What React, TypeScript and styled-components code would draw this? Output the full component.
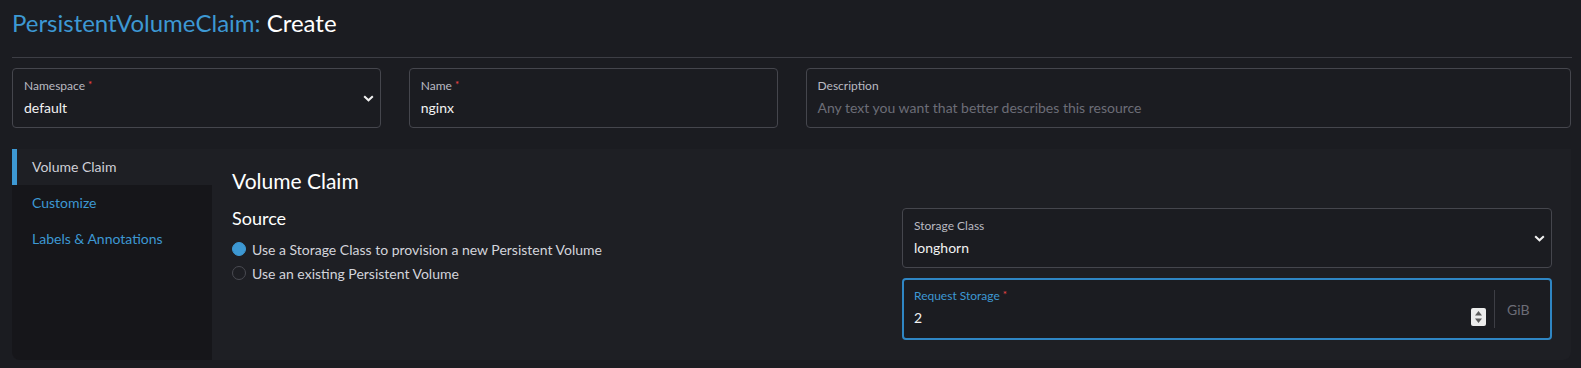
import React from "react";
import { styled, createGlobalStyle } from "styled-components";

const GlobalStyle = createGlobalStyle`
  html, body {
    margin: 0;
    padding: 0;
    background: #1b1c21;
  }
  body {
    font-family: "Lato", "Noto Sans", sans-serif;
    color: #e6e6e6;
  }
  * {
    box-sizing: border-box;
  }
`;

const Page = styled.div`
  width: 1581px;
  height: 368px;
  padding: 0 10px 0 12px;
  background: #1b1c21;
  overflow: hidden;
`;

const Header = styled.header`
  padding-top: 8px;
  border-bottom: 1px solid #3d3e45;
  padding-bottom: 19px;
  margin-right: -1px;
`;

const Title = styled.h1`
  margin: 0;
  font-size: 24px;
  line-height: 30px;
  font-weight: 400;
  color: #fff;
`;

const TitleType = styled.span`
  color: #3d98d3;
`;

const FieldGrid = styled.div`
  display: grid;
  grid-template-columns: repeat(4, 1fr);
  gap: 28px;
  margin-top: 10px;
`;

const Field = styled.div<{ $span?: number; $focused?: boolean }>`
  position: relative;
  grid-column: span ${(p) => p.$span ?? 1};
  display: flex;
  align-items: stretch;
  height: ${(p) => (p.$focused ? 62 : 60)}px;
  border: ${(p) => (p.$focused ? "2px solid #2f86c4" : "1px solid #45464d")};
  border-radius: 4px;
  background: #1b1c21;
`;

const FieldBody = styled.div<{ $focused?: boolean }>`
  flex: 1;
  display: flex;
  flex-direction: column;
  padding: ${(p) => (p.$focused ? "8px 10px 8px" : "9px 11px 8px")};
  min-width: 0;
`;

const Label = styled.div<{ $active?: boolean }>`
  font-size: 12px;
  line-height: 16px;
  color: ${(p) => (p.$active ? "#3d98d3" : "#b9bac2")};
`;

const Required = styled.span`
  color: #f64747;
  font-size: 10px;
  vertical-align: top;
  margin-left: 3px;
  line-height: 12px;
`;

const Value = styled.div<{ $placeholder?: boolean }>`
  margin-top: 4px;
  font-size: 14px;
  line-height: 20px;
  color: ${(p) => (p.$placeholder ? "#6c6d77" : "#f2f2f2")};
  white-space: nowrap;
`;

const Chevron = styled.div`
  display: flex;
  align-items: center;
  padding: 0 6px 0 0;
`;

const Suffix = styled.div`
  display: flex;
  align-items: center;
  width: 56px;
  margin: 10px 0 10px;
  padding-left: 12px;
  border-left: 1px solid #3d3e45;
  font-size: 14px;
  color: #6c6d77;
`;

const Spinner = styled.div`
  align-self: center;
  margin-top: 16px;
  margin-right: 8px;
  width: 15px;
  height: 18px;
  background: #ececec;
  border-radius: 2px;
  display: flex;
  align-items: center;
  justify-content: center;
`;

const Tabbed = styled.div`
  display: flex;
  margin-top: 21px;
  height: 211px;
  background: #1e1f24;
  border-radius: 0 0 8px 8px;
`;

const SideNav = styled.nav`
  width: 200px;
  flex: 0 0 200px;
  display: flex;
  flex-direction: column;
  background: #16161a;
  border-radius: 0 0 0 8px;
`;

const TabItem = styled.div<{ $active?: boolean }>`
  height: 36px;
  display: flex;
  align-items: center;
  padding-left: ${(p) => (p.$active ? 15 : 20)}px;
  padding-bottom: 1px;
  font-size: 14px;
  color: ${(p) => (p.$active ? "#cfd0d7" : "#3d98d3")};
  background: ${(p) => (p.$active ? "#1e1f24" : "transparent")};
  border-left: ${(p) => (p.$active ? "5px solid #3d98d3" : "none")};
`;

const Content = styled.section`
  flex: 1;
  padding: 19px 19px 20px 20px;
`;

const Heading = styled.h2`
  margin: 0 0 14px;
  font-size: 21px;
  line-height: 26px;
  font-weight: 400;
  color: #fff;
`;

const Columns = styled.div`
  display: grid;
  grid-template-columns: 1fr 1fr;
  gap: 20px;
`;

const Column = styled.div<{ $gap: number }>`
  display: flex;
  flex-direction: column;
  gap: ${(p) => p.$gap}px;
`;

const SubHeading = styled.h3`
  margin: 0;
  font-size: 18px;
  line-height: 20px;
  font-weight: 400;
  color: #fff;
`;

const RadioGroup = styled.div`
  display: flex;
  flex-direction: column;
`;

const RadioRow = styled.div`
  display: flex;
  align-items: center;
  height: 24px;
  font-size: 14px;
  color: #d3d4db;
`;

const RadioDot = styled.span<{ $checked?: boolean }>`
  width: 14px;
  height: 14px;
  border-radius: 50%;
  margin-right: 6px;
  background: ${(p) => (p.$checked ? "#3d98d3" : "transparent")};
  border: 1px solid ${(p) => (p.$checked ? "#3d98d3" : "#4a4b52")};
`;

const ChevronIcon = () => (
  <svg width="11" height="7" viewBox="0 0 11 7">
    <polyline
      points="1.2,1.2 5.5,5.3 9.8,1.2"
      fill="none"
      stroke="#f2f2f2"
      strokeWidth="2"
    />
  </svg>
);

const SpinIcon = () => (
  <svg width="9" height="14" viewBox="0 0 9 14">
    <polygon points="4.5,1 8,5.5 1,5.5" fill="#5b5b5b" />
    <polygon points="1,8.5 8,8.5 4.5,13" fill="#5b5b5b" />
  </svg>
);

const App = () => {
  return (
    <Page>
      <GlobalStyle />
      <Header>
        <Title>
          <TitleType>PersistentVolumeClaim:</TitleType> Create
        </Title>
      </Header>

      <FieldGrid>
        <Field>
          <FieldBody>
            <Label>
              Namespace<Required>*</Required>
            </Label>
            <Value>default</Value>
          </FieldBody>
          <Chevron>
            <ChevronIcon />
          </Chevron>
        </Field>
        <Field>
          <FieldBody>
            <Label>
              Name<Required>*</Required>
            </Label>
            <Value>nginx</Value>
          </FieldBody>
        </Field>
        <Field $span={2}>
          <FieldBody>
            <Label>Description</Label>
            <Value $placeholder>
              Any text you want that better describes this resource
            </Value>
          </FieldBody>
        </Field>
      </FieldGrid>

      <Tabbed>
        <SideNav>
          <TabItem $active>Volume Claim</TabItem>
          <TabItem>Customize</TabItem>
          <TabItem>Labels &amp; Annotations</TabItem>
        </SideNav>
        <Content>
          <Heading>Volume Claim</Heading>
          <Columns>
            <Column $gap={9}>
              <SubHeading>Source</SubHeading>
              <RadioGroup>
                <RadioRow>
                  <RadioDot $checked />
                  Use a Storage Class to provision a new Persistent Volume
                </RadioRow>
                <RadioRow>
                  <RadioDot />
                  Use an existing Persistent Volume
                </RadioRow>
              </RadioGroup>
            </Column>
            <Column $gap={10}>
              <Field>
                <FieldBody>
                  <Label>Storage Class</Label>
                  <Value>longhorn</Value>
                </FieldBody>
                <Chevron>
                  <ChevronIcon />
                </Chevron>
              </Field>
              <Field $focused>
                <FieldBody $focused>
                  <Label $active>
                    Request Storage<Required>*</Required>
                  </Label>
                  <Value>2</Value>
                </FieldBody>
                <Spinner>
                  <SpinIcon />
                </Spinner>
                <Suffix>GiB</Suffix>
              </Field>
            </Column>
          </Columns>
        </Content>
      </Tabbed>
    </Page>
  );
};

export default App;
